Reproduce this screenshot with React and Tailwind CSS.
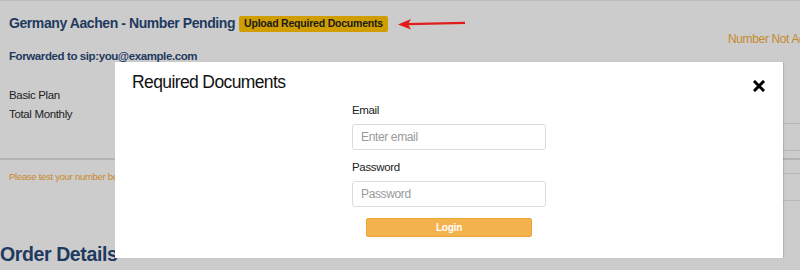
import React from 'react';

const navy = 'text-[#1f3a5f]';

const CloseIcon = () => (
  <svg width="12" height="12" viewBox="0 0 12 12">
    <path d="M2 2 L10 10 M10 2 L2 10" stroke="#000" strokeWidth="3" strokeLinecap="square" />
  </svg>
);

const Arrow = () => (
  <svg width="70" height="14" viewBox="0 0 70 14" className="ml-[9px]">
    <path d="M1 7.5 L14 2 L11 7.3 L14 12.5 Z" fill="#e21b1b" />
    <path d="M10 7.2 L68 5.8" stroke="#e21b1b" strokeWidth="2.3" />
  </svg>
);

const Field = ({ label, placeholder, type = 'text', className = '' }) => (
  <div className={className}>
    <label className="block h-[16px] leading-[16px] text-[11.5px] tracking-[-0.03em] text-[#222]">{label}</label>
    <input
      type={type}
      placeholder={placeholder}
      className="mt-[6px] block w-[194px] h-[26px] rounded-[3px] border border-[#dcdcdc] bg-white pl-[8px] text-[12px] tracking-[-0.03em] text-[#333] placeholder:text-[#9a9a9a] outline-none"
    />
  </div>
);

const RequiredDocsModal = () => (
  <div className="absolute left-[115px] top-[61px] w-[668px] h-[196px] bg-white shadow-[1px_0_1px_rgba(0,0,0,0.12)]">
    <div className="h-[40px] flex items-center justify-between pl-[17px] pr-[18px]">
      <h2 className="text-[17.5px] tracking-[-0.035em] text-[#111]">Required Documents</h2>
      <div className="mt-[7px]">
        <CloseIcon />
      </div>
    </div>
    <div className="flex flex-col items-center">
      <Field label="Email" placeholder="Enter email" type="email" />
      <Field label="Password" placeholder="Password" type="password" className="mt-[9px]" />
      <button className="mt-[11px] w-[166px] h-[19px] rounded-[2px] bg-[#f4b24c] border border-[#eaa63d] text-white text-[10px] tracking-[-0.02em] font-bold leading-none">
        Login
      </button>
    </div>
  </div>
);

export default function App() {
  return (
    <div className="relative w-[800px] h-[270px] overflow-hidden bg-[#cccccc] border-t border-[#bdbdbd] font-['Liberation_Sans',Arial,sans-serif]">
      <div className="mt-[14px] h-[17px] pl-[9px] flex items-center">
        <h1 className={`text-[14px] tracking-[-0.03em] font-bold ${navy} whitespace-nowrap`}>Germany Aachen - Number Pending</h1>
        <span className="ml-[4px] h-[16px] px-[5px] flex items-center rounded-[2px] bg-[#d09e00] text-[10.5px] tracking-[-0.02em] font-bold text-[#1a1a1a] whitespace-nowrap">
          Upload Required Documents
        </span>
        <Arrow />
      </div>
      <div className="h-[15px] pl-[728px] text-[12px] tracking-[-0.03em] leading-[15px] text-[#c48a2c] whitespace-nowrap">Number Not Active</div>
      <div className={`h-[14px] mt-[2px] pl-[9px] text-[11.5px] tracking-[-0.035em] leading-[14px] font-bold ${navy}`}>Forwarded to sip:you@example.com</div>

      <div className="mt-[2px] h-[95px] flex border-b-2 border-[#b3b3b3]">
        <div className="pl-[9px] pt-[21px] text-[11.5px] tracking-[-0.03em] text-[#222] leading-[19px]">
          <div>Basic Plan</div>
          <div>Total Monthly</div>
        </div>
        <div className="ml-auto w-[220px] flex flex-col">
          <div className="h-[59px] border-b border-[#b8b8b8]" />
          <div className="h-[27px] border-b border-[#b8b8b8]" />
        </div>
      </div>

      <div className="h-[84px] flex">
        <div className="pl-[9px] pt-[10px] text-[9.5px] tracking-[-0.03em] text-[#c8892a] whitespace-nowrap">
          Please test your number before sharing it with your customers.
        </div>
        <div className="ml-auto w-[220px] flex flex-col shrink-0">
          <div className="h-[14px] border-b border-[#b8b8b8]" />
          <div className="h-[27px] border-b border-[#b8b8b8]" />
        </div>
      </div>

      <h3 className={`text-[19.5px] tracking-[-0.02em] font-bold ${navy} leading-[20px]`}>Order Details</h3>

      <RequiredDocsModal />
    </div>
  );
}
